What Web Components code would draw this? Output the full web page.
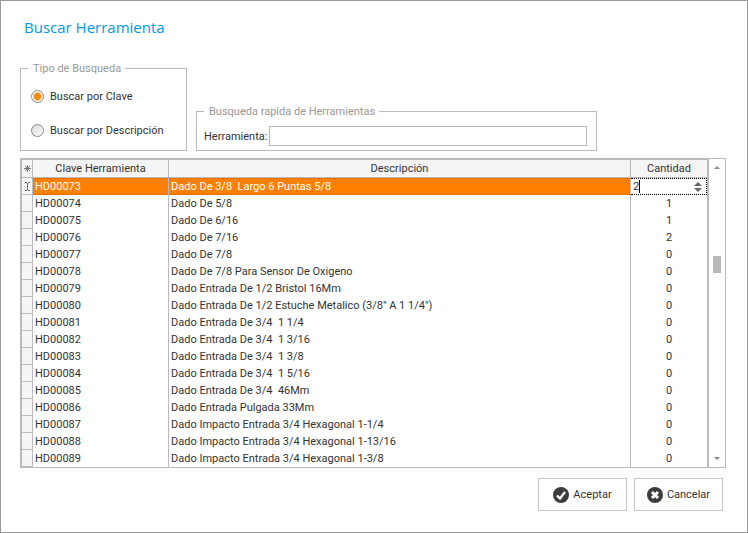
<!DOCTYPE html>
<html lang="es">
<head>
<meta charset="utf-8">
<meta name="viewport" content="width=device-width, initial-scale=1">
<title>Buscar Herramienta</title>
<style>
    body {
        margin: 0;
        font: 11px/17px Roboto, "Liberation Sans", sans-serif;
        color: #333;
        --line: #bababa;
        --accent: #ff8000;
        --head: #f5f5f5;
    }
    .filters {
        display: flex;
        align-items: flex-end;
        gap: 9px;
        margin-bottom: 7px;
    }
    .type {
        flex: 0 0 167px;
    }
    .quick {
        flex: 0 1 401px;
    }
</style>
</head>
<body>
<tool-dialog heading="Buscar Herramienta">
    <div class="filters">
        <group-box class="type" label="Tipo de Busqueda">
            <radio-list name="tipo" value="Buscar por Clave" options="Buscar por Clave|Buscar por Descripción"></radio-list>
        </group-box>
        <group-box class="quick" label="Busqueda rapida de Herramientas">
            <text-field label="Herramienta:"></text-field>
        </group-box>
    </div>
    <tool-grid></tool-grid>
    <dialog-button slot="actions" icon="ok">Aceptar</dialog-button>
    <dialog-button slot="actions" icon="cancel">Cancelar</dialog-button>
</tool-dialog>

<script>
class ToolDialog extends HTMLElement {

    connectedCallback() {
        let shadowRoot = this.attachShadow({mode: "open"});
        shadowRoot.innerHTML =
            `<style>
                :host {
                    display: block;
                    box-sizing: border-box;
                    min-height: 100vh;
                    padding: 13px 21px 20px 19px;
                    border: 1px solid #999;
                    background: #fff;
                }
                h1 {
                    margin: 0 0 20px 4px;
                    font: 15px/26px "Open Sans", "Noto Sans", sans-serif;
                    color: #0099e5;
                }
                footer {
                    display: flex;
                    justify-content: flex-end;
                    gap: 7px;
                    padding: 10px 3px 0 0;
                }
            </style>
            <h1>${ this.getAttribute("heading") }</h1>
            <slot></slot>
            <footer><slot name="actions"></slot></footer>`;
    }

}

class GroupBox extends HTMLElement {

    connectedCallback() {
        let shadowRoot = this.attachShadow({mode: "open"});
        shadowRoot.innerHTML =
            `<style>
                :host {
                    display: block;
                }
                fieldset {
                    min-width: 0;
                    margin: 0;
                    padding: 0 9px 4px 7px;
                    border: 1px solid var(--line);
                }
                legend {
                    padding: 0 4px 0 5px;
                    color: #999;
                }
            </style>
            <fieldset>
                <legend>${ this.getAttribute("label") }</legend>
                <slot></slot>
            </fieldset>`;
    }

}

class RadioList extends HTMLElement {

    connectedCallback() {
        let shadowRoot = this.attachShadow({mode: "open"});
        let name = this.getAttribute("name");
        let value = this.getAttribute("value");
        let items = this.getAttribute("options").split("|").map( (text) =>
            `<label><input type="radio" name="${ name }" value="${ text }" ${ text === value ? "checked" : "" }>${ text }</label>`
        );
        shadowRoot.innerHTML =
            `<style>
                :host {
                    display: grid;
                    gap: 17px;
                    padding: 11px 0 7px 3px;
                }
                label {
                    display: flex;
                    align-items: center;
                    gap: 6px;
                    white-space: nowrap;
                }
                input {
                    appearance: none;
                    box-sizing: border-box;
                    flex: none;
                    width: 13px;
                    height: 13px;
                    margin: 0;
                    border: 1px solid #888;
                    border-radius: 50%;
                    background: linear-gradient(135deg, #d8d8d8, #fff);
                }
                input:checked {
                    background: radial-gradient(circle, #f38b0a 3px, #fff 5px);
                }
            </style>
            ${ items.join("") }`;
    }

}

class TextField extends HTMLElement {

    connectedCallback() {
        let shadowRoot = this.attachShadow({mode: "open"});
        shadowRoot.innerHTML =
            `<style>
                :host {
                    display: flex;
                    align-items: center;
                    gap: 2px;
                    padding-top: 6px;
                }
                input {
                    flex: 1;
                    min-width: 0;
                    box-sizing: border-box;
                    height: 20px;
                    padding: 0 3px;
                    border: 1px solid var(--line);
                    font: inherit;
                    color: inherit;
                    outline: 0;
                }
            </style>
            <label for="field">${ this.getAttribute("label") }</label>
            <input id="field" type="text">`;
    }

}

const tools = [
    ["HD00073", "Dado De 3/8  Largo 6 Puntas 5/8", 2],
    ["HD00074", "Dado De 5/8", 1],
    ["HD00075", "Dado De 6/16", 1],
    ["HD00076", "Dado De 7/16", 2],
    ["HD00077", "Dado De 7/8", 0],
    ["HD00078", "Dado De 7/8 Para Sensor De Oxigeno", 0],
    ["HD00079", "Dado Entrada De 1/2 Bristol 16Mm", 0],
    ["HD00080", "Dado Entrada De 1/2 Estuche Metalico (3/8\" A 1 1/4\")", 0],
    ["HD00081", "Dado Entrada De 3/4  1 1/4", 0],
    ["HD00082", "Dado Entrada De 3/4  1 3/16", 0],
    ["HD00083", "Dado Entrada De 3/4  1 3/8", 0],
    ["HD00084", "Dado Entrada De 3/4  1 5/16", 0],
    ["HD00085", "Dado Entrada De 3/4  46Mm", 0],
    ["HD00086", "Dado Entrada Pulgada 33Mm", 0],
    ["HD00087", "Dado Impacto Entrada 3/4 Hexagonal 1-1/4", 0],
    ["HD00088", "Dado Impacto Entrada 3/4 Hexagonal 1-13/16", 0],
    ["HD00089", "Dado Impacto Entrada 3/4 Hexagonal 1-3/8", 0]
];

class ToolGrid extends HTMLElement {

    connectedCallback() {
        let shadowRoot = this.attachShadow({mode: "open"});
        let rows = tools.map( ([key, text, count], i) =>
            `<tr class="${ i === 0 ? "active" : "" }">
                <td class="mark">${ i === 0 ? `<svg width="7" height="11" viewBox="0 0 7 11" fill="none" stroke="#666"><path d="M1 1.5h2M4 1.5h2M1 9.5h2M4 9.5h2M3.5 2v7"/></svg>` : "" }</td>
                <td>${ key }</td>
                <td>${ text }</td>
                <td class="count">${ i === 0 ? `<spin-field value="${ count }"></spin-field>` : count }</td>
            </tr>`
        );
        shadowRoot.innerHTML =
            `<style>
                :host {
                    display: flex;
                    border: 1px solid var(--line);
                }
                table {
                    flex: 1;
                    table-layout: fixed;
                    width: 0;
                    border: solid var(--line);
                    border-width: 1px 1px 0;
                    border-spacing: 0;
                }
                .c-mark { width: 11px; }
                .c-key { width: 136px; }
                .c-count { width: 76px; }
                th, td {
                    box-sizing: border-box;
                    height: 17px;
                    padding: 0 2px;
                    border-right: 1px solid var(--line);
                    white-space: pre;
                    overflow: hidden;
                }
                th {
                    height: 18px;
                    padding: 0;
                    border-bottom: 1px solid var(--line);
                    background: var(--head);
                    font-weight: normal;
                    text-align: center;
                }
                th:last-child, td:last-child {
                    border-right: 0;
                }
                .mark {
                    padding: 0;
                    border-bottom: 1px solid var(--line);
                    background: var(--head);
                    text-align: center;
                }
                svg {
                    display: block;
                    margin: auto;
                }
                .count {
                    text-align: center;
                }
                .active td:not(.mark) {
                    --dots: repeating-linear-gradient(90deg, #1c8cff 0 1px, transparent 1px 2px);
                    background: var(--dots) top / 100% 1px no-repeat, var(--dots) bottom / 100% 1px no-repeat, var(--accent);
                    color: #fff;
                }
                .active .count:not(.mark) {
                    padding: 0;
                    border: 1px dotted #000;
                    border-left: 0;
                    background: #fff;
                    color: #333;
                }
                .scroll {
                    display: flex;
                    flex-direction: column;
                    align-items: center;
                    justify-content: space-between;
                    box-sizing: border-box;
                    width: 17px;
                    padding: 7px 0;
                    border-left: 1px solid var(--line);
                }
                .scroll svg {
                    margin: 0;
                }
                .track {
                    flex: 1;
                    display: grid;
                    grid-template-rows: 87fr 17px 184fr;
                }
                .thumb {
                    grid-row: 2;
                    width: 8px;
                    background: #b8b8b8;
                }
            </style>
            <table>
                <colgroup><col class="c-mark"><col class="c-key"><col><col class="c-count"></colgroup>
                <thead>
                    <tr>
                        <th class="mark"><svg width="7" height="7" viewBox="0 0 7 7" stroke="#777"><path d="M3.5 0v7M0 3.5h7M1 1l5 5M6 1l-5 5"/></svg></th>
                        <th>Clave Herramienta</th>
                        <th>Descripción</th>
                        <th>Cantidad</th>
                    </tr>
                </thead>
                <tbody>${ rows.join("") }</tbody>
            </table>
            <div class="scroll">
                <svg width="6" height="3" viewBox="0 0 6 3" fill="#888"><path d="M0 3l3-3 3 3z"/></svg>
                <div class="track"><div class="thumb"></div></div>
                <svg width="6" height="3" viewBox="0 0 6 3" fill="#888"><path d="M0 0l3 3 3-3z"/></svg>
            </div>`;
    }

}

class SpinField extends HTMLElement {

    connectedCallback() {
        let shadowRoot = this.attachShadow({mode: "open"});
        shadowRoot.innerHTML =
            `<style>
                :host {
                    display: flex;
                    align-items: center;
                    justify-content: space-between;
                    height: 15px;
                    padding: 0 4px 0 2px;
                }
                input {
                    width: 6px;
                    height: 13px;
                    padding: 0;
                    border: 0;
                    border-right: 1px solid #000;
                    background: none;
                    font: inherit;
                    color: inherit;
                    outline: 0;
                }
                .arrows {
                    display: grid;
                    gap: 2px;
                }
                button {
                    display: block;
                    padding: 0;
                    border: 0;
                    background: none;
                }
                svg {
                    display: block;
                }
            </style>
            <input type="text" inputmode="numeric" aria-label="Cantidad" value="${ this.getAttribute("value") }">
            <span class="arrows">
                <button type="button" aria-label="Más"><svg width="8" height="4" viewBox="0 0 8 4" fill="#666"><path d="M0 4l4-4 4 4z"/></svg></button>
                <button type="button" aria-label="Menos"><svg width="8" height="4" viewBox="0 0 8 4" fill="#666"><path d="M0 0l4 4 4-4z"/></svg></button>
            </span>`;
        let input = shadowRoot.querySelector("input");
        let [more, less] = shadowRoot.querySelectorAll("button");
        more.addEventListener("click", () => input.value = Number(input.value) + 1);
        less.addEventListener("click", () => input.value = Math.max(Number(input.value) - 1, 0));
    }

}

class DialogButton extends HTMLElement {

    connectedCallback() {
        let shadowRoot = this.attachShadow({mode: "open"});
        let icon = this.getAttribute("icon") === "ok"
            ? `<path d="M4 8.5l3 3 5-6.5" fill="none" stroke="#fff" stroke-width="2.4"/>`
            : `<path d="M5 5l6 6M11 5l-6 6" fill="none" stroke="#fff" stroke-width="3"/>`;
        shadowRoot.innerHTML =
            `<style>
                :host {
                    display: block;
                }
                button {
                    display: flex;
                    align-items: center;
                    justify-content: center;
                    gap: 4px;
                    box-sizing: border-box;
                    width: 89px;
                    height: 33px;
                    padding: 0;
                    border: 1px solid #c8c8c8;
                    background: #fff;
                    font: inherit;
                    color: inherit;
                }
            </style>
            <button type="button">
                <svg width="16" height="16" viewBox="0 0 16 16"><circle cx="8" cy="8" r="8" fill="#3c3c3c"/>${ icon }</svg>
                <slot></slot>
            </button>`;
    }

}

window.customElements.define("tool-dialog", ToolDialog);
window.customElements.define("group-box", GroupBox);
window.customElements.define("radio-list", RadioList);
window.customElements.define("text-field", TextField);
window.customElements.define("spin-field", SpinField);
window.customElements.define("tool-grid", ToolGrid);
window.customElements.define("dialog-button", DialogButton);
</script>
</body>
</html>
